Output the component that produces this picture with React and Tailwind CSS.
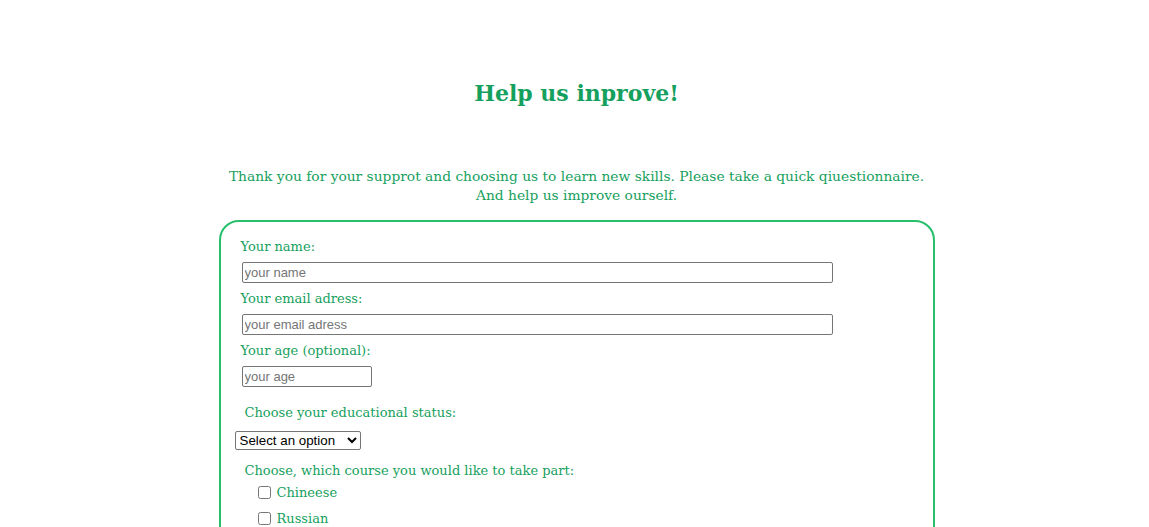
import React from "react";

// Questionnaire page: title, intro text and the survey form
const courses = ["Chineese", "Russian"];

const Field = ({ label, placeholder, width }) => (
  <div className="flex flex-col">
    <label className="leading-[20px] pl-[20px]">{label}</label>
    <input
      type="text"
      placeholder={placeholder}
      className={`${width} h-[21px] mt-[5px] mb-[6px] ml-[21px] px-[2px] border border-[#767676] rounded-[2px] text-[13px] text-black placeholder:text-[#757575] font-['Liberation_Sans',Arial,sans-serif]`}
    />
  </div>
);

const App = () => {
  return (
    <div className="min-h-screen bg-white pl-[4px] text-[#16a05d] font-['DejaVu_Serif',Georgia,serif] text-[13px]">
      {/* Title */}
      <h1 className="text-center font-bold text-[22px] leading-[30px] pt-[78px]">
        Help us inprove!
      </h1>

      {/* Intro */}
      <p className="text-center text-[13.8px] leading-[19px] mt-[59px] w-[716px] mx-auto">
        Thank you for your supprot and choosing us to learn new skills. Please take a quick qiuestionnaire.
        <br />
        And help us improve ourself.
      </p>

      {/* Form */}
      <form className="w-[716px] mx-auto mt-[15px] border-2 border-[#27bf6b] rounded-[20px] pt-[15px] pb-10">
        <Field label="Your name:" placeholder="your name" width="w-[591px]" />
        <Field label="Your email adress:" placeholder="your email adress" width="w-[591px]" />
        <Field label="Your age (optional):" placeholder="your age" width="w-[130px]" />

        <div className="leading-[20px] pl-[24px] mt-[10px]">Choose your educational status:</div>
        <select className="w-[126px] mt-[8px] ml-[14px] h-[19px] border border-[#767676] rounded-[2px] text-[13.33px] text-black font-['Liberation_Sans',Arial,sans-serif] pr-[2px]">
          <option>Select an option</option>
          <option>Student</option>
          <option>Graduate</option>
        </select>

        <div className="leading-[20px] pl-[24px] mt-[10px]">Choose, which course you would like to take part:</div>
        <div className="flex flex-col gap-[6px] mt-[2px] pl-[37px]">
          {courses.map((c) => (
            <label key={c} className="flex items-center gap-[6px] leading-[20px]">
              <input type="checkbox" className="w-[13px] h-[13px]" />
              <span>{c}</span>
            </label>
          ))}
        </div>
      </form>
    </div>
  );
};

export default App;
